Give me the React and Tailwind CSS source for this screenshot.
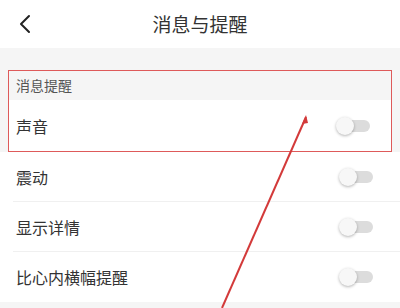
import { ChevronLeft } from "lucide-react";

const rows = ["震动", "显示详情", "比心内横幅提醒"];

function Toggle() {
  return (
    <div className="relative w-[34px] h-[18px] flex items-center">
      <div className="absolute right-0 w-[26px] h-[12px] rounded-full bg-[#dcdcdc]" />
      <div className="absolute left-0 w-[18px] h-[18px] rounded-full bg-[#f7f7f7] shadow-[0_1px_3px_rgba(0,0,0,0.3)]" />
    </div>
  );
}

export default function App() {
  return (
    <div
      className="relative w-[400px] h-[308px] overflow-hidden bg-white text-[#333]"
      style={{ fontFamily: '"Noto Sans CJK SC", "Noto Sans", sans-serif' }}
    >
      {/* Header */}
      <div className="h-[48px] flex items-center relative">
        <ChevronLeft className="ml-[9px] w-[32px] h-[32px] text-[#222]" strokeWidth={1.5} />
        <div className="absolute inset-0 flex items-center justify-center text-[19px] text-[#333]">
          消息与提醒
        </div>
      </div>

      {/* Section */}
      <div className="bg-[#f5f5f5] pt-[22px]">
        <div className="mx-[8px] border-[1.5px] border-[#de5a5a]">
          <div className="h-[29px] flex items-center pl-[7px] text-[14px] text-[#555] bg-[#f5f5f5]">
            消息提醒
          </div>
          <div className="h-[51px] flex items-center justify-between pl-[7px] pr-[21px] bg-white text-[16px]">
            <span>声音</span>
            <Toggle />
          </div>
        </div>
      </div>

      <div className="bg-white">
        {rows.map((r, i) => (
          <div key={r} className="pl-[13px]">
            <div
              className={
                "h-[50px] flex items-center justify-between pl-[3px] pr-[27px] text-[16px] " +
                (i < rows.length - 1 ? "border-b border-[#f0f0f0]" : "")
              }
            >
              <span>{r}</span>
              <Toggle />
            </div>
          </div>
        ))}
      </div>
      <div className="bg-[#f5f5f5] h-[10px]" />

      {/* Annotation arrow */}
      <svg className="absolute inset-0 pointer-events-none" width="400" height="308">
        <line x1="306" y1="117" x2="222" y2="308" stroke="#d33a3a" strokeWidth="2" />
        <polygon points="306,115 302,124 308,123" fill="#d33a3a" />
      </svg>
    </div>
  );
}
